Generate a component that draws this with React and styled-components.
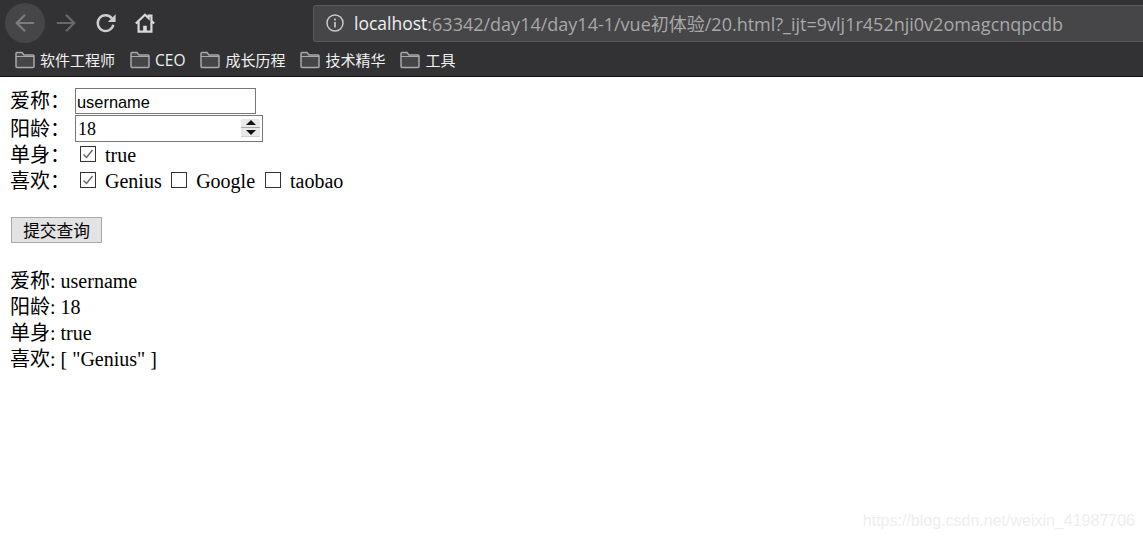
import React from "react";
import styled, { createGlobalStyle } from "styled-components";

const GlobalStyle = createGlobalStyle`
  html, body {
    margin: 0;
    padding: 0;
    background: #fff;
  }
  body {
    font-family: "Liberation Serif", "Noto Sans CJK SC", serif;
    font-size: 20px;
    color: #000;
    overflow: hidden;
  }
`;

const Page = styled.div`
  position: relative;
  width: 1143px;
  height: 538px;
  overflow: hidden;
`;

const Chrome = styled.header`
  height: 77px;
  background: #323234;
  border-bottom: 1px solid #111;
  box-sizing: border-box;
  font-family: "Open Sans", "Noto Sans CJK SC", sans-serif;
`;

const Toolbar = styled.div`
  display: flex;
  align-items: center;
  height: 46px;
  padding-left: 5px;
`;

const NavButton = styled.div`
  width: 40px;
  height: 40px;
  margin-left: ${(p) => p.$offset || 0}px;
  display: flex;
  align-items: center;
  justify-content: center;
  border-radius: 50%;
  background: ${(p) => (p.$hover ? "#464648" : "transparent")};
`;

const Omnibox = styled.div`
  display: flex;
  align-items: center;
  flex: 1;
  height: 37px;
  margin-left: 148px;
  padding-left: 11px;
  box-sizing: border-box;
  background: #464648;
  border: 1px solid #5a5a5c;
  border-right: 0;
  border-radius: 3px 0 0 3px;
  white-space: nowrap;
`;

const Host = styled.span`
  color: #f0f0f0;
  font-size: 17.5px;
  margin-left: 9px;
`;

const UrlRest = styled.span`
  color: #a8a8a8;
  font-size: 18px;
`;

const Bookmarks = styled.nav`
  display: flex;
  align-items: center;
  height: 28px;
  padding-left: 15px;
`;

const Bookmark = styled.div`
  display: flex;
  align-items: center;
  gap: 5px;
  margin-right: 15px;
  color: #f0f0f0;
  font-size: ${(p) => (p.$latin ? 15.5 : 15)}px;
  line-height: 20px;
`;

const Content = styled.main`
  padding: 10px 0 0 10px;
  line-height: 26px;
`;

const Row = styled.div`
  display: flex;
  align-items: center;
  height: ${(p) => p.$height || 26}px;
`;

const Label = styled.label`
  width: 65px;
  flex: none;
`;

const TextInput = styled.input`
  box-sizing: border-box;
  width: 181px;
  height: 26px;
  padding: 2px 1px 0;
  border: 1px solid #767676;
  font: 16.4px "Liberation Sans", sans-serif;
  color: #000;
  outline: none;
  border-radius: 0;
`;

const NumberWrap = styled.div`
  position: relative;
  box-sizing: border-box;
  width: 188px;
  height: 27px;
  padding-left: 2px;
  border: 1px solid #767676;
  font-size: 18px;
  line-height: 26px;
`;

const Spinner = styled.div`
  position: absolute;
  top: 3px;
  right: 2px;
  box-sizing: border-box;
  width: 19px;
  height: 18px;
  display: flex;
  flex-direction: column;
  justify-content: center;
  align-items: center;
  background: #e8e8e8;
  border-bottom: 1px solid #d0d0d0;
`;

const SpinDivider = styled.span`
  width: 100%;
  height: 1px;
  margin: 2px 0;
  background: #a8a8a8;
`;

const Caret = styled.span`
  width: 0;
  height: 0;
  border-left: 5px solid transparent;
  border-right: 5px solid transparent;
  border-${(p) => (p.$up ? "bottom" : "top")}: 5px solid #111;
`;

const Box = styled.span`
  flex: none;
  box-sizing: border-box;
  width: 16px;
  height: 16px;
  margin: -2px 9px 0 ${(p) => p.$left ?? 5}px;
  border: 1px solid #333;
  background: #fff;
  display: flex;
  align-items: center;
  justify-content: center;
`;

const SubmitButton = styled.button`
  display: block;
  box-sizing: border-box;
  width: 91px;
  height: 26px;
  margin: 23px 0 25px 1px;
  padding: 3px 0 0;
  background: #e3e3e3;
  border: 1px solid #a9a9a9;
  border-radius: 0;
  font: 16.7px "Liberation Serif", "Noto Sans CJK SC", serif;
  line-height: 22px;
  color: #000;
`;

const OutputLine = styled.div`
  height: 26px;
`;

const Watermark = styled.div`
  position: absolute;
  right: 8px;
  bottom: 8px;
  font: 16px "Liberation Sans", sans-serif;
  color: #eeeeee;
`;

const Check = () => (
  <svg width="12" height="12" viewBox="0 0 12 12">
    <path d="M1.5 6.5 L4.5 9.5 L10.5 2" fill="none" stroke="#666" strokeWidth="1.4" />
  </svg>
);

const Folder = () => (
  <svg width="20" height="18" viewBox="0 0 20 18">
    <path
      d="M1 15.5V2.5a1 1 0 0 1 1-1h5l2 2.5h9a1 1 0 0 1 1 1V15.5a1 1 0 0 1-1 1H2a1 1 0 0 1-1-1Z"
      fill="#464648"
      stroke="#a8a8a8"
      strokeWidth="1.5"
    />
    <path d="M1 5.5h18" fill="none" stroke="#a8a8a8" strokeWidth="1" />
  </svg>
);

const Arrow = ({ color, flip }) => (
  <svg width="22" height="22" viewBox="0 0 24 24" style={flip ? { transform: "scaleX(-1)" } : undefined}>
    <path d="M22 12H3 M12 3 3 12l9 9" fill="none" stroke={color} strokeWidth="2.4" />
  </svg>
);

const Reload = () => (
  <svg width="22" height="22" viewBox="0 0 24 24">
    <path d="M18.5 7A8.6 8.6 0 1 0 20 14" fill="none" stroke="#cdcdcd" strokeWidth="2.6" />
    <path d="M22.5 2.5V11H14Z" fill="#cdcdcd" />
  </svg>
);

const HomeIcon = () => (
  <svg width="22" height="22" viewBox="0 0 24 24">
    <path
      d="M2 12.5 12 3l4 3.8V4h3v5.7l3 2.8M5 10.5V21.5h14V10.5"
      fill="none"
      stroke="#d8d8d8"
      strokeWidth="2.4"
    />
    <path d="M10 21.5V15h4v6.5Z" fill="#d8d8d8" />
  </svg>
);

const bookmarks = ["软件工程师", "CEO", "成长历程", "技术精华", "工具"];

export default function App() {
  return (
    <Page>
      <GlobalStyle />
      <Chrome>
        <Toolbar>
          <NavButton $hover>
            <Arrow color="#7c7c7e" />
          </NavButton>
          <NavButton $offset={1}>
            <Arrow color="#68686a" flip />
          </NavButton>
          <NavButton>
            <Reload />
          </NavButton>
          <NavButton $offset={-1}>
            <HomeIcon />
          </NavButton>
          <Omnibox>
            <svg width="20" height="20" viewBox="0 0 20 20">
              <circle cx="10" cy="10" r="8" fill="none" stroke="#c8c8c8" strokeWidth="1.5" />
              <path d="M10 9v5.5 M10 5.5v2" stroke="#c8c8c8" strokeWidth="1.7" />
            </svg>
            <Host>localhost</Host>
            <UrlRest>:63342/day14/day14-1/vue初体验/20.html?_ijt=9vlj1r452nji0v2omagcnqpcdb</UrlRest>
          </Omnibox>
        </Toolbar>
        <Bookmarks>
          {bookmarks.map((name) => (
            <Bookmark key={name} $latin={name === "CEO"}>
              <Folder />
              {name}
            </Bookmark>
          ))}
        </Bookmarks>
      </Chrome>
      <Content>
        <Row $height={28}>
          <Label>爱称：</Label>
          <TextInput defaultValue="username" />
        </Row>
        <Row $height={27}>
          <Label>阳龄：</Label>
          <NumberWrap>
            18
            <Spinner>
              <Caret $up />
              <SpinDivider />
              <Caret />
            </Spinner>
          </NumberWrap>
        </Row>
        <Row>
          <Label>单身：</Label>
          <Box>
            <Check />
          </Box>
          true
        </Row>
        <Row>
          <Label>喜欢：</Label>
          <Box>
            <Check />
          </Box>
          Genius
          <Box $left={9.5} />
          Google
          <Box $left={10} />
          taobao
        </Row>
        <SubmitButton>提交查询</SubmitButton>
        <OutputLine>爱称: username</OutputLine>
        <OutputLine>阳龄: 18</OutputLine>
        <OutputLine>单身: true</OutputLine>
        <OutputLine>喜欢: [ "Genius" ]</OutputLine>
      </Content>
      <Watermark>https://blog.csdn.net/weixin_41987706</Watermark>
    </Page>
  );
}
